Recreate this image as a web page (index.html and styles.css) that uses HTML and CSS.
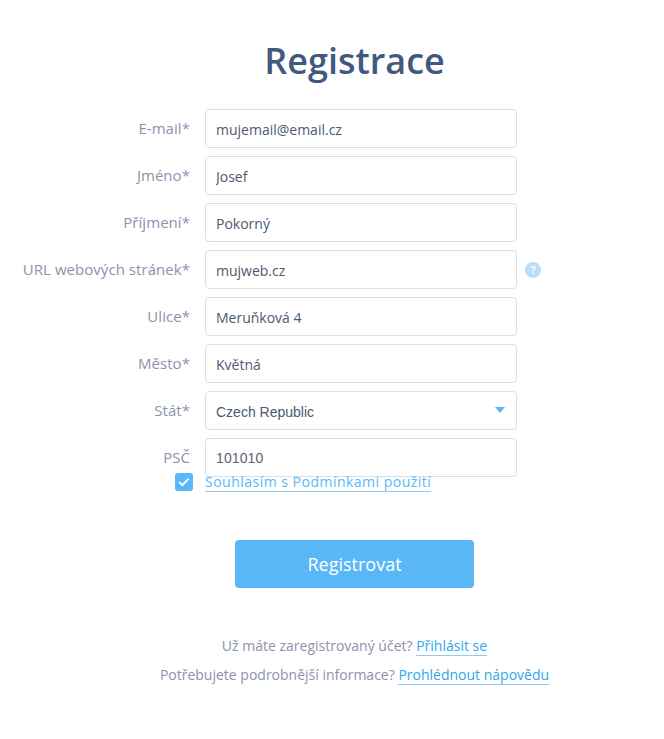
FILE: index.html
```html
<!DOCTYPE html>
<html lang="cs">
<head>
  <meta charset="UTF-8">
  <meta name="viewport" content="width=device-width, initial-scale=1.0">
  <title>Registrace</title>
  <link rel="stylesheet" href="styles.css">
</head>
<body>
  <div class="page">
    <h1 class="title">Registrace</h1>

    <form class="form">
      <div class="row">
        <label class="label">E-mail*</label>
        <input class="field" type="text" value="mujemail@email.cz">
      </div>
      <div class="row">
        <label class="label">Jméno*</label>
        <input class="field" type="text" value="Josef">
      </div>
      <div class="row">
        <label class="label">Příjmení*</label>
        <input class="field" type="text" value="Pokorný">
      </div>
      <div class="row">
        <label class="label">URL webových stránek*</label>
        <input class="field" type="text" value="mujweb.cz">
        <span class="help">?</span>
      </div>
      <div class="row">
        <label class="label">Ulice*</label>
        <input class="field" type="text" value="Meruňková 4">
      </div>
      <div class="row">
        <label class="label">Město*</label>
        <input class="field" type="text" value="Květná">
      </div>
      <div class="row">
        <label class="label">Stát*</label>
        <div class="select-wrap">
          <select class="field select">
            <option>Czech Republic</option>
          </select>
          <span class="caret"></span>
        </div>
      </div>
      <div class="row">
        <label class="label">PSČ</label>
        <input class="field field-zip" type="text" value="101010">
      </div>

      <div class="terms">
        <span class="checkbox">
          <svg width="12" height="10" viewBox="0 0 12 10"><path d="M1.2 5l3.2 3.2 6.3-6.6" fill="none" stroke="#fff" stroke-width="1.9"/></svg>
        </span>
        <a class="link terms-link" href="#">Souhlasím s Podmínkami použití</a>
      </div>

      <button class="submit" type="button">Registrovat</button>
    </form>

    <p class="note first">Už máte zaregistrovaný účet? <a class="link" href="#">Přihlásit se</a></p>
    <p class="note">Potřebujete podrobnější informace? <a class="link" href="#">Prohlédnout nápovědu</a></p>
  </div>
</body>
</html>
```

FILE: styles.css
```css
* {
  box-sizing: border-box;
}

body {
  margin: 0;
  background: #fff;
  font-family: "Open Sans", "Liberation Sans", sans-serif;
}

.page {
  width: 664px;
  height: 739px;
  overflow: hidden;
  padding-top: 36px;
}

.title {
  margin: 0 0 24px;
  padding-left: 45px;
  text-align: center;
  font-size: 36px;
  font-weight: 600;
  line-height: 49px;
  color: #41597f;
}

.form {
  display: flex;
  flex-direction: column;
}

.row {
  display: flex;
  align-items: center;
  height: 39px;
  margin-bottom: 8px;
}

.label {
  width: 190px;
  margin-right: 15px;
  margin-top: -2px;
  text-align: right;
  font-size: 15px;
  letter-spacing: 0.05px;
  color: #8c92ab;
}

.field {
  width: 312px;
  height: 39px;
  padding: 1px 10px 0;
  border: 1px solid #dddddd;
  border-radius: 4px;
  background: #fff;
  font-family: "Open Sans", sans-serif;
  font-size: 14px;
  color: #4d5a70;
  outline: none;
}

.field-zip {
  font-family: "Liberation Sans", sans-serif;
  letter-spacing: 0.1px;
  color: #5b6470;
}

.help {
  display: flex;
  align-items: center;
  justify-content: center;
  width: 16px;
  height: 16px;
  margin-left: 8px;
  border-radius: 50%;
  background: #bcdcf7;
  color: #fff;
  font-size: 11px;
  font-weight: 700;
}

.select-wrap {
  position: relative;
  width: 312px;
}

.select {
  display: block;
  appearance: none;
  padding-top: 3px;
  font-family: "Liberation Sans", sans-serif;
}

.caret {
  position: absolute;
  top: 16px;
  right: 12px;
  border-left: 5.5px solid transparent;
  border-right: 5.5px solid transparent;
  border-top: 6px solid #5ab7f7;
}

.terms {
  display: flex;
  align-items: center;
  height: 20px;
  margin-top: -13px;
  padding-left: 175px;
  position: relative;
}

.checkbox {
  display: flex;
  align-items: center;
  justify-content: center;
  width: 18px;
  height: 18px;
  margin-right: 12px;
  border-radius: 3px;
  background: #5ab7f7;
}

.link {
  color: #2fa6ee;
  text-decoration: none;
  border-bottom: 1px solid #8ccdf8;
}

.terms-link {
  padding-bottom: 1px;
  margin-top: 1px;
  font-size: 14px;
  line-height: 17px;
  letter-spacing: 0.49px;
  color: #5ab7f7;
}

.submit {
  align-self: flex-start;
  width: 239px;
  height: 48px;
  margin: 48px 0 0 235px;
  border: none;
  border-radius: 4px;
  background: #5ab7f7;
  color: #fff;
  font-family: "Open Sans", sans-serif;
  font-size: 18px;
}

.note {
  margin: 0 0 10px;
  padding-left: 45px;
  text-align: center;
  font-size: 14px;
  line-height: 19px;
  color: #8c92ab;
}

.first {
  margin-top: 48px;
}
```
